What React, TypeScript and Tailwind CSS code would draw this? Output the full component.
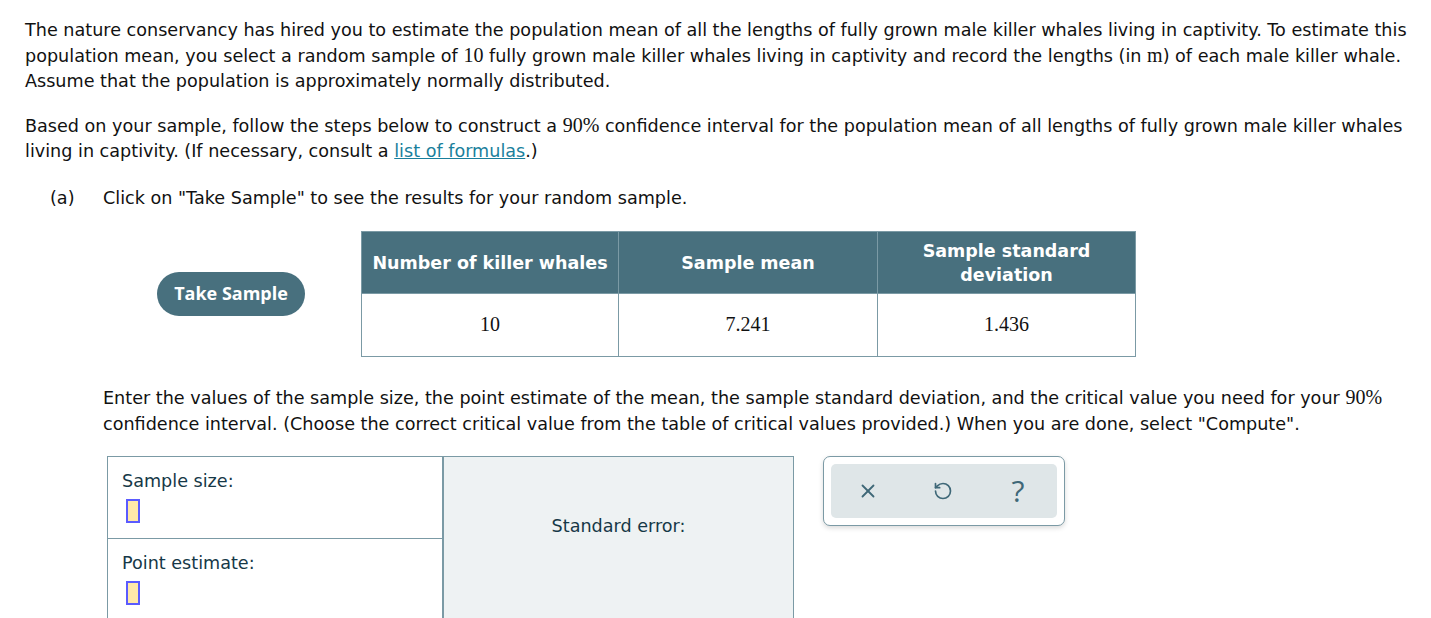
import { X, RotateCcw } from "lucide-react";

const body = "font-['DejaVu_Sans',Verdana,sans-serif]";
const serif = "font-['Liberation_Serif',serif] text-[20px] leading-none";

function InputBox() {
  return <span className="ml-[4px] mt-[4px] block h-[24px] w-[14px] border-2 border-[#5b5bff] bg-[#ffe9a9]" />;
}

export default function App() {
  return (
    <div className={`${body} min-h-screen bg-white text-[17.6px] leading-[25.5px] text-[#111]`}>
      <div className="w-[1418px] pl-[25px] pt-[18px]">
        <p>
          The nature conservancy has hired you to estimate the population mean of all the lengths of fully grown male killer whales living in captivity. To estimate this population mean, you select a random sample of <span className={serif}>10</span> fully grown male killer whales living in captivity and record the lengths (in <span className={serif}>m</span>) of each male killer whale. Assume that the population is approximately normally distributed.
        </p>
        <p className="mt-[19px]">
          Based on your sample, follow the steps below to construct a <span className={serif}>90%</span> confidence interval for the population mean of all lengths of fully grown male killer whales living in captivity. (If necessary, consult a{" "}
          <a href="#" className="text-[#1a7f9c] underline">list of formulas</a>.)
        </p>
        <div className="mt-[21px] flex">
          <span className="w-[78px] pl-[25px]">(a)</span>
          <span>Click on "Take Sample" to see the results for your random sample.</span>
        </div>
      </div>

      <div className="ml-[157px] mt-[20px] flex items-center">
        <button className="h-[44px] w-[148px] rounded-full bg-[#48707e] font-['Open_Sans',sans-serif] text-[18px] font-bold text-white">
          Take Sample
        </button>
        <table className="ml-[56px] border-collapse border border-[#7b9aa5] text-center">
          <thead>
            <tr className="h-[62px] bg-[#48707e] text-[17.5px] font-bold leading-[24px] text-white">
              <th className="w-[257px] border border-[#7b9aa5] px-1">Number of killer whales</th>
              <th className="w-[259px] border border-[#7b9aa5] px-2">Sample mean</th>
              <th className="w-[258px] border border-[#7b9aa5] px-8">Sample standard deviation</th>
            </tr>
          </thead>
          <tbody>
            <tr className="h-[63px] text-[20px]">
              <td className="border border-[#7b9aa5] font-['Liberation_Serif',serif]">10</td>
              <td className="border border-[#7b9aa5] font-['Liberation_Serif',serif]">7.241</td>
              <td className="border border-[#7b9aa5] font-['Liberation_Serif',serif]">1.436</td>
            </tr>
          </tbody>
        </table>
      </div>

      <p className="ml-[103px] mt-[29px] w-[1320px]">
        Enter the values of the sample size, the point estimate of the mean, the sample standard deviation, and the critical value you need for your <span className={serif}>90%</span> confidence interval. (Choose the correct critical value from the table of critical values provided.) When you are done, select "Compute".
      </p>

      <div className="ml-[107px] mt-[19px] flex items-start">
        <div className="flex border border-[#7b9aa5] text-[#163847]">
          <div className="flex w-[334px] flex-col">
            <div className="h-[82px] border-b border-[#7b9aa5] px-[14px] pt-[12px]">
              Sample size:
              <InputBox />
            </div>
            <div className="h-[82px] px-[14px] pt-[12px]">
              Point estimate:
              <InputBox />
            </div>
          </div>
          <div className="flex w-[351px] items-center justify-center border-l-2 border-[#7b9aa5] bg-[#eef2f3] pb-[24px]">
            Standard error:
          </div>
        </div>

        <div className="ml-[29px] rounded-[7px] border border-[#7b9aa5] bg-white p-[7px] shadow-[0_2px_5px_rgba(0,0,0,0.15)]">
          <div className="flex h-[54px] w-[226px] items-center gap-[35px] rounded-[5px] bg-[#dfe6e8] pl-[17px] text-[#3f6878]">
            <span className="flex w-[40px] justify-center"><X size={22} strokeWidth={2} /></span>
            <span className="flex w-[40px] justify-center"><RotateCcw size={20} strokeWidth={2} /></span>
            <span className="flex w-[40px] justify-center font-['Open_Sans',sans-serif] text-[30px]">?</span>
          </div>
        </div>
      </div>
    </div>
  );
}
